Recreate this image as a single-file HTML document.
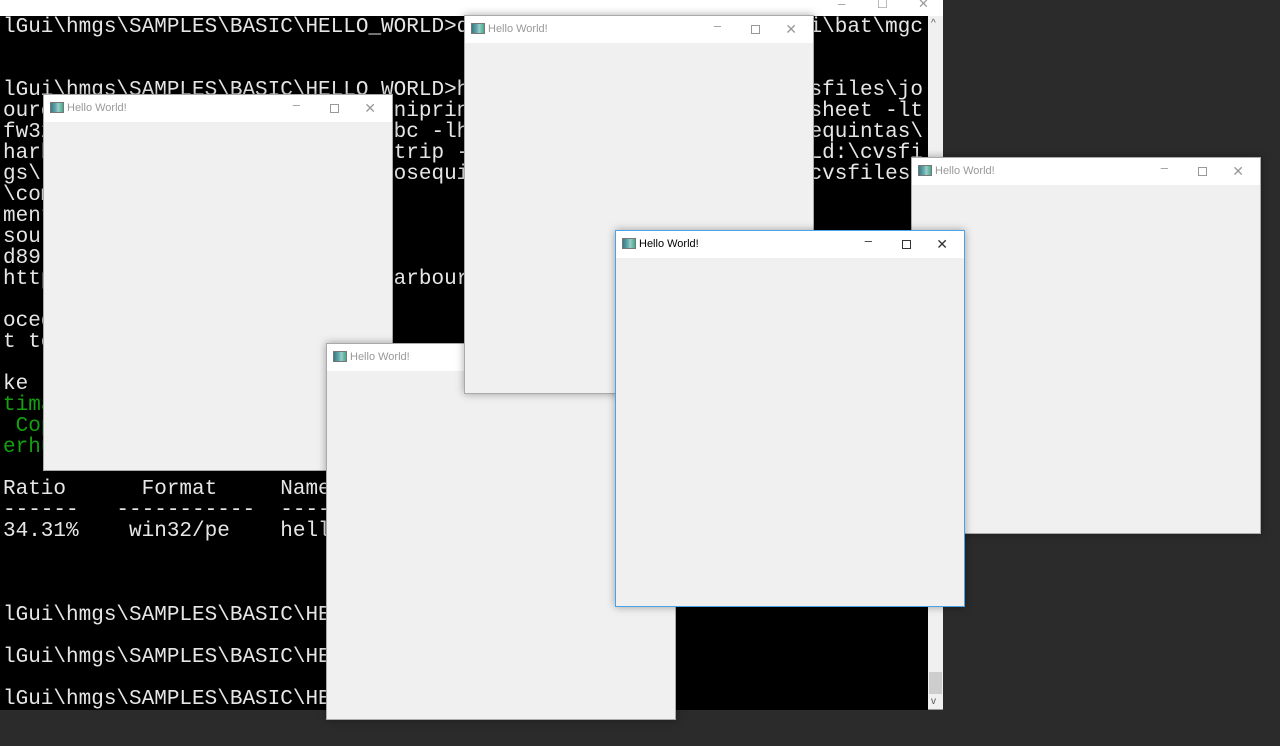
<!DOCTYPE html>
<html><head><meta charset="utf-8"><style>
*{margin:0;padding:0;box-sizing:border-box}
body{width:1280px;height:746px;background:#2b2b2b;position:relative;overflow:hidden;font-family:"Liberation Sans",sans-serif}
#con{position:absolute;left:0;top:0;width:943px;height:710px;background:#000}
#contitle{position:absolute;left:0;top:0;width:943px;height:16px;background:#fff}
#contitle span{position:absolute;top:-4px;font-size:13px;color:#999}
#pre{position:absolute;left:3px;top:17px;font-family:"Liberation Mono",monospace;font-size:21px;line-height:21px;color:#e6e6e6;white-space:pre}
.g{color:#13a10e}
#sb{position:absolute;left:928px;top:16px;width:15px;height:694px;background:#f0f0f0;border-bottom:1px solid #999}
#thumb{position:absolute;left:1px;top:656px;width:13px;height:22px;background:#cdcdcd}
.arr{position:absolute;left:3px;font-size:10px;color:#555}
.win{position:absolute;width:350px;height:377px;background:#f0f0f0;border:1px solid #aaa;box-shadow:0 0 8px rgba(0,0,0,.35)}
.tb{height:27px;background:#fff;position:relative}
.ic{position:absolute;left:6px;top:7px;width:14px;height:11px;background:linear-gradient(90deg,#3a7a8a,#6aa 40%,#9cc 60%,#4a8);border:1px solid #777}
.tt{position:absolute;left:23px;top:7px;font-size:11px;color:#999}
.act .tt{color:#000}
.act{border-color:#4aa3e8}
.ctl{position:absolute;top:6px;font-size:13px;color:#999;line-height:14px}
.act .ctl{color:#333}
.mn{right:92px;top:3px}
.mx{right:53px;width:9px;height:9px;border:1px solid #999;top:9px}
.act .mx{border-color:#333}
.cl{right:16px;font-size:14px;top:6px;font-weight:100}
</style></head><body>
<div id="con">
<div id="contitle"><span style="left:838px">–</span><span style="left:877px;top:-3px;font-size:12px">☐</span><span style="left:918px">✕</span></div>
<div id="pre">lGui\hmgs\SAMPLES\BASIC\HELLO_WORLD>dxxxxxxxxxxxxxxxxxxxxxxxxxxxi\bat\mgc


lGui\hmgs\SAMPLES\BASIC\HELLO_WORLD>hxxxxxxxxxxxxxxxxxxxxxxxxxxxsfiles\jo
ourcexxxxxxxxxxxxxxxxxxxxxxxxxxniprinxxxxxxxxxxxxxxxxxxxxxxxxxxxsheet -lt
fw32xxxxxxxxxxxxxxxxxxxxxxxxxxxbc -lhxxxxxxxxxxxxxxxxxxxxxxxxxxxequintas\
harboxxxxxxxxxxxxxxxxxxxxxxxxxxtrip -xxxxxxxxxxxxxxxxxxxxxxxxxxxLd:\cvsfi
gs\lixxxxxxxxxxxxxxxxxxxxxxxxxxosequixxxxxxxxxxxxxxxxxxxxxxxxxxxcvsfiles
\com
ment
sourc
d89)
httpsxxxxxxxxxxxxxxxxxxxxxxxxxxarbour

ocedu
t to

ke
<span class="g">timat</span>
<span class="g"> Copy</span>
<span class="g">erhum</span>

Ratio      Format     Name
------   -----------  ----
34.31%    win32/pe    hello



lGui\hmgs\SAMPLES\BASIC\HELLO

lGui\hmgs\SAMPLES\BASIC\HELLO

lGui\hmgs\SAMPLES\BASIC\HELLO</div>
<div id="sb"><span class="arr" style="top:2px">^</span><div id="thumb"></div><span class="arr" style="top:680px">v</span></div>
</div>

<div class="win" style="left:43px;top:94px"><div class="tb"><div class="ic"></div><div class="tt">Hello World!</div><div class="ctl mn">–</div><div class="ctl mx"></div><div class="ctl cl">✕</div></div></div>
<div class="win" style="left:326px;top:343px"><div class="tb"><div class="ic"></div><div class="tt">Hello World!</div><div class="ctl mn">–</div><div class="ctl mx"></div><div class="ctl cl">✕</div></div></div>
<div class="win" style="left:464px;top:15px;height:379px"><div class="tb"><div class="ic"></div><div class="tt">Hello World!</div><div class="ctl mn">–</div><div class="ctl mx"></div><div class="ctl cl">✕</div></div></div>
<div class="win" style="left:911px;top:157px"><div class="tb"><div class="ic"></div><div class="tt">Hello World!</div><div class="ctl mn">–</div><div class="ctl mx"></div><div class="ctl cl">✕</div></div></div>
<div class="win act" style="left:615px;top:230px"><div class="tb"><div class="ic"></div><div class="tt">Hello World!</div><div class="ctl mn">–</div><div class="ctl mx"></div><div class="ctl cl">✕</div></div></div>
</body></html>
